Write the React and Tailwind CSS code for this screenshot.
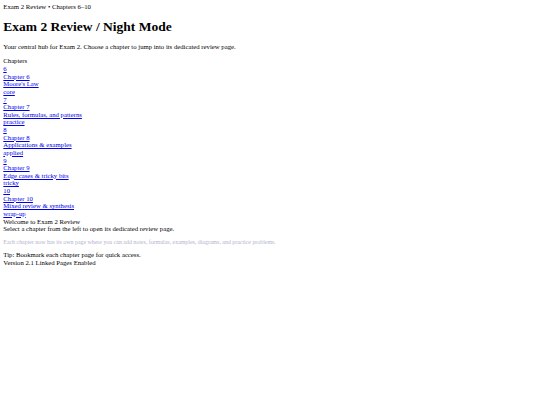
import React from 'react';

const chapters = [
  { num: '6', title: 'Chapter 6', sub: "Moore's Law", tag: 'core' },
  { num: '7', title: 'Chapter 7', sub: 'Rules, formulas, and patterns', tag: 'practice' },
  { num: '8', title: 'Chapter 8', sub: 'Applications & examples', tag: 'applied' },
  { num: '9', title: 'Chapter 9', sub: 'Edge cases & tricky bits', tag: 'tricky' },
  { num: '10', title: 'Chapter 10', sub: 'Mixed review & synthesis', tag: 'wrap-up' },
];

export default function App() {
  return (
    <div className="bg-white text-black font-['Liberation_Serif','Times_New_Roman',serif] text-[6.72px] leading-[7.63px] px-[3.3px] pt-[2.5px]">
      <div>Exam 2 Review • Chapters 6–10</div>
      <h1 className="text-[13.5px] leading-[15.3px] font-bold my-[8.9px]">Exam 2 Review / Night Mode</h1>
      <p className="my-[6.6px]">Your central hub for Exam 2. Choose a chapter to jump into its dedicated review page.</p>

      <div>Chapters</div>
      <nav>
        {chapters.map((c) => (
          <a key={c.num} href="#" className="block text-[#0000ee] underline decoration-[0.5px] underline-offset-1">
            <span className="block">{c.num}</span>
            <span className="block">{c.title}</span>
            <span className="block">{c.sub}</span>
            <span className="block">{c.tag}</span>
          </a>
        ))}
      </nav>

      <div>Welcome to Exam 2 Review</div>
      <p>Select a chapter from the left to open its dedicated review page.</p>
      <p className="my-[6px] text-[5.9px] leading-[6.6px] text-[#b4b4cc]">
        Each chapter now has its own page where you can add notes, formulas, examples, diagrams, and practice problems.
      </p>
      <div>Tip: Bookmark each chapter page for quick access.</div>
      <div>Version 2.1 Linked Pages Enabled</div>
    </div>
  );
}
